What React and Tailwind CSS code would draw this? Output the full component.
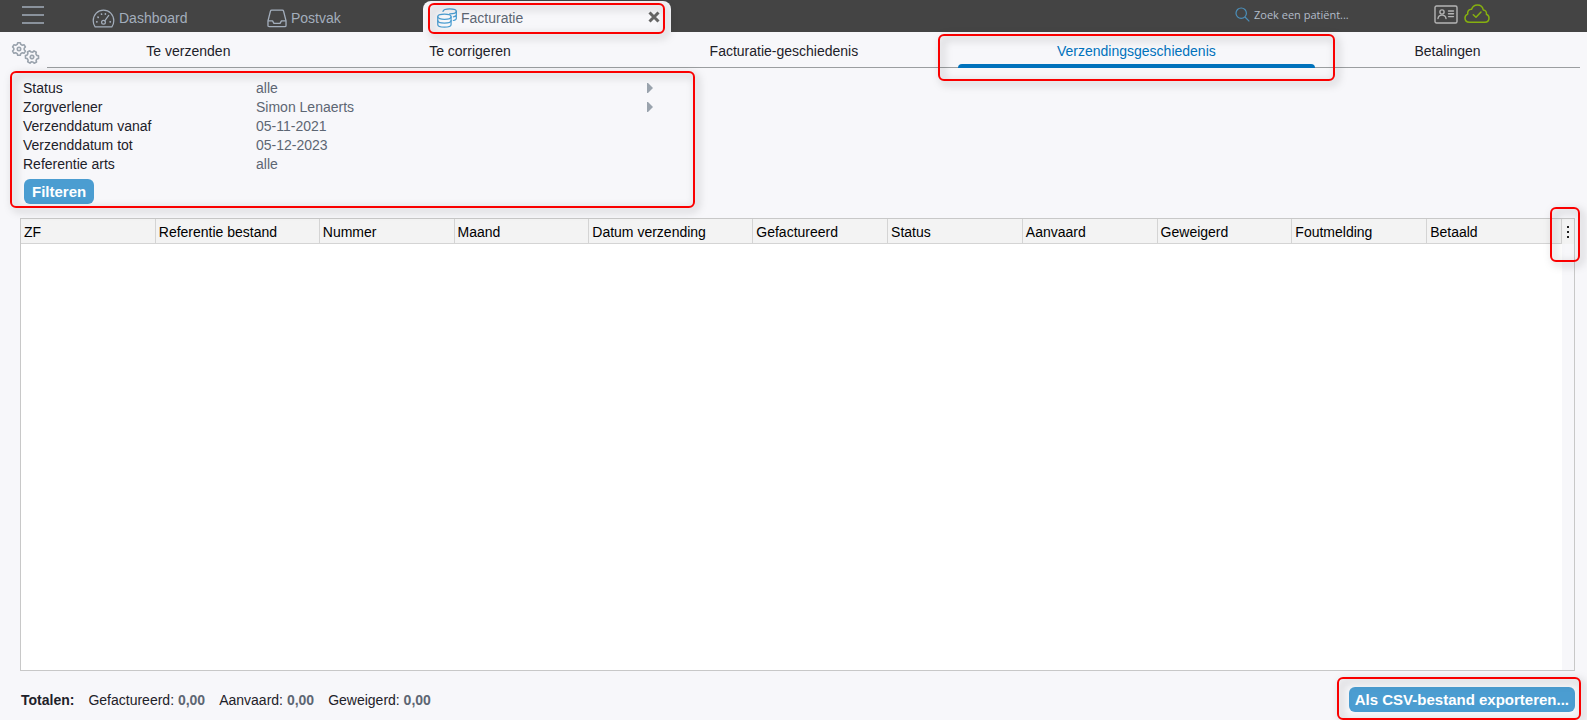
import React, { useState } from "react";

const TABS = [
  "Te verzenden",
  "Te corrigeren",
  "Facturatie-geschiedenis",
  "Verzendingsgeschiedenis",
  "Betalingen",
];

const COLUMNS = [
  { label: "ZF" },
  { label: "Referentie bestand", wide: true },
  { label: "Nummer" },
  { label: "Maand" },
  { label: "Datum verzending", wide: true },
  { label: "Gefactureerd" },
  { label: "Status" },
  { label: "Aanvaard" },
  { label: "Geweigerd" },
  { label: "Foutmelding" },
  { label: "Betaald" },
];

const FILTERS = [
  { id: "status", label: "Status", value: "alle", select: true },
  { id: "zorgverlener", label: "Zorgverlener", value: "Simon Lenaerts", select: true },
  { id: "vanaf", label: "Verzenddatum vanaf", value: "05-11-2021" },
  { id: "tot", label: "Verzenddatum tot", value: "05-12-2023" },
  { id: "referentie", label: "Referentie arts", value: "alle" },
];

const TOTALS = [
  { label: "Gefactureerd", value: "0,00" },
  { label: "Aanvaard", value: "0,00" },
  { label: "Geweigerd", value: "0,00" },
];

function GaugeIcon() {
  return (
    <svg width="23" height="19" viewBox="0 0 24 20" fill="none" stroke="currentColor" strokeWidth="1.3" strokeLinecap="round">
      <path d="M3.2 18.8h17.6c1.2-1.7 2-3.8 2-6.300C22.800 6 18 1.200 12 1.200S1.200 6 1.200 12.500c0 2.500.8 4.600 2 6.300z" strokeLinejoin="round" />
      <circle cx="12" cy="14" r="2" />
      <path d="M13.300 12.400l4.200-5.600" />
      <path d="M4.900 13.500h.2M19 13.500h.2M6.200 8.600l.2.200M9.900 5.300l.1.200M14 5.200v.1" strokeWidth="1.800" />
    </svg>
  );
}

function InboxIcon() {
  return (
    <svg width="20" height="19" viewBox="0 0 21 20" fill="none" stroke="currentColor" strokeWidth="1.400" strokeLinejoin="round">
      <path d="M1 12.500L3.600 2.200C3.800 1.500 4.200 1.200 4.900 1.200h11.200c.7 0 1.100.3 1.300 1L20 12.500v4.800c0 .9-.4 1.300-1.300 1.300H2.300C1.400 18.600 1 18.200 1 17.300z" />
      <path d="M1 12.500h4.800l1.500 2.700h6.400l1.500-2.700H20" />
    </svg>
  );
}

function CoinsIcon() {
  return (
    <svg width="20" height="20" viewBox="0 0 21 21" fill="none" stroke="#4b9dd1" strokeWidth="1.300" strokeLinecap="round">
      <ellipse cx="7.800" cy="9.200" rx="7" ry="2.700" />
      <path d="M.8 9.200v8.100c0 1.500 3.100 2.800 7 2.800s7-1.300 7-2.800V9.200" />
      <path d="M.8 13.200c0 1.500 3.100 2.700 7 2.700s7-1.200 7-2.700" />
      <path d="M6.300 3.600C6.300 2 9.400.8 13.300.8s7 1.200 7 2.700-3.100 2.700-7 2.700" />
      <path d="M20.300 3.500v7.400c0 .9-1.200 1.700-3.100 2.200M20.300 7.200c0 .9-1.200 1.700-3.100 2.200" />
    </svg>
  );
}

const GEAR =
  "M-1.300 -6.300h2.600l.5 1.700 1.500.8 1.700-.5 1.400 2.300-1.200 1.200v1.600l1.200 1.200-1.400 2.300-1.700-.5-1.500.8-.5 1.700h-2.600l-.5-1.700-1.500-.8-1.700.5-1.400-2.300 1.200-1.200v-1.600l-1.200-1.200 1.400-2.300 1.700.5 1.500-.8z";

function GearsIcon() {
  return (
    <svg width="30" height="24" viewBox="0 0 30 24" fill="none" stroke="#9aa3ad" strokeWidth="1.600" strokeLinejoin="round">
      <g transform="translate(8 8)">
        <path d={GEAR} />
        <circle r="1.700" />
      </g>
      <g transform="translate(21 16) rotate(30)">
        <path d={GEAR} />
        <circle r="1.700" />
      </g>
    </svg>
  );
}

function CardIcon() {
  return (
    <svg width="24" height="19" viewBox="0 0 24 19" fill="none" stroke="#b4b4b4" strokeWidth="1.400" strokeLinecap="round">
      <rect x="1" y="1" width="22" height="17" rx="1.500" />
      <circle cx="8" cy="7" r="2.100" />
      <path d="M4 13.500c.3-2.300 1.900-3.400 4-3.400s3.700 1.100 4 3.400M14.500 6h5M14.500 8.800h5M14.500 11.600h5" />
    </svg>
  );
}

function CloudIcon() {
  return (
    <svg width="26" height="20" viewBox="0 0 26 20" fill="none" stroke="#86b00f" strokeWidth="1.500" strokeLinecap="round" strokeLinejoin="round">
      <path d="M5.500 18.200C2.800 18.200 1 16.400 1 14c0-1.900 1.100-3.300 2.700-3.900C3.200 7 5 5 7.600 5.200 8.500 2.600 10.600 1 13.300 1c3.200 0 5.500 2 6 5 2.200.2 3.600 2 3.100 4.300 1.600.6 2.600 1.900 2.600 3.700 0 2.400-1.700 4.200-4.200 4.200z" />
      <path d="M9.300 10.700l2.700 2.600 5-5.300" />
    </svg>
  );
}

// Red frame laid over a part of the screen that needs attention
function Highlight({ className }) {
  return (
    <div
      className={`pointer-events-none absolute z-10 rounded-md border-2 border-[#fa0000] drop-shadow-[3px_3px_4px_rgba(0,0,0,0.35)] ${className}`}
    />
  );
}

function TopBar() {
  return (
    <header className="flex h-8 items-stretch bg-[#444444] text-[#a3aebc]">
      <button aria-label="Menu" className="ml-[22px] flex w-[22px] flex-col justify-between pt-1.5 pb-2">
        <span className="h-0.5 w-full bg-[#8a929c]" />
        <span className="h-0.5 w-full bg-[#8a929c]" />
        <span className="h-0.5 w-full bg-[#8a929c]" />
      </button>
      <nav className="flex">
        <a href="#dashboard" className="ml-12 flex w-[175px] items-center gap-1 pt-1">
          <GaugeIcon />
          Dashboard
        </a>
        <a href="#postvak" className="flex w-[156px] items-center gap-1 pt-1">
          <InboxIcon />
          Postvak
        </a>
        <div className="relative mt-px flex w-[248px] items-center rounded-t-lg bg-[#f7f7fa] pr-[11px] pl-3.5 text-[#5d6673]">
          <a href="#facturatie" className="flex flex-1 items-center gap-1 pt-0.5">
            <CoinsIcon />
            Facturatie
          </a>
          <button aria-label="Sluiten" className="text-[#666]">
            <svg width="12" height="12" viewBox="0 0 12 12" stroke="currentColor" strokeWidth="3">
              <path d="M1.500 1.500l9 9M10.500 1.500l-9 9" />
            </svg>
          </button>
          <Highlight className="-bottom-0.5 left-[5px] right-1.5 top-0.5" />
        </div>
      </nav>
      <div className="ml-auto flex items-center pb-1">
        <label htmlFor="zoek" aria-label="Zoek een patiënt">
          <svg width="15" height="15" viewBox="0 0 15 15" fill="none" stroke="#4b8fba" strokeWidth="1.200">
            <circle cx="6.200" cy="6.200" r="5.200" />
            <path d="M10 10l4.300 4.300" />
          </svg>
        </label>
        <input
          id="zoek"
          placeholder="Zoek een patiënt..."
          className="ml-1 w-[180px] bg-transparent pt-0.5 font-['Open_Sans',sans-serif] text-[11px] outline-none placeholder:text-[#b3bdca]"
        />
        <button aria-label="Identiteitskaart">
          <CardIcon />
        </button>
        <button aria-label="Verbonden" className="ml-1.5 mr-[97px]">
          <CloudIcon />
        </button>
      </div>
    </header>
  );
}

function TabBar({ active, onChange }) {
  return (
    <div className="flex h-9 pr-[7px]">
      <button aria-label="Instellingen" className="w-[47px] shrink-0 pt-1.5 pl-[11px]">
        <GearsIcon />
      </button>
      <div role="tablist" className="flex flex-1 border-b border-[#9b9ea0]">
        {TABS.map((t) => {
          const on = t === active;
          return (
            <button
              key={t}
              role="tab"
              aria-selected={on}
              onClick={() => onChange(t)}
              className={`relative flex-auto pt-0.5 ${on ? "text-[#0072bc]" : "text-[#1d2129]"}`}
            >
              {t}
              {on && (
                <>
                  <span className="absolute inset-x-0 -bottom-px h-1 rounded-t bg-[#0072bc]" />
                  <Highlight className="-bottom-3.5 -left-5 -right-5 top-0.5" />
                </>
              )}
            </button>
          );
        })}
      </div>
    </div>
  );
}

function FilterPanel() {
  return (
    <form onSubmit={(e) => e.preventDefault()} className="relative ml-2.5 mt-[3px] w-[685px] pt-[7px] pb-1 pl-[13px]">
      {FILTERS.map((f) => (
        <div key={f.id} className="flex h-[19px] items-center">
          <label htmlFor={f.id} className="w-[233px] text-[#1d2129]">
            {f.label}
          </label>
          {f.select ? (
            <>
              <select id={f.id} className="w-[391px] appearance-none bg-transparent text-[#5d6673] outline-none">
                <option>{f.value}</option>
              </select>
              <svg width="6" height="10" viewBox="0 0 6 10" fill="#9aa3ad">
                <path d="M0 0h1l5 5-5 5H0z" />
              </svg>
            </>
          ) : (
            <input id={f.id} defaultValue={f.value} className="w-[391px] bg-transparent text-[#5d6673] outline-none" />
          )}
        </div>
      ))}
      <button className="ml-px mt-1.5 h-[25px] rounded-md bg-[#4b9dd1] px-2 text-[15px] font-bold text-white">Filteren</button>
      <Highlight className="inset-0" />
    </form>
  );
}

function ResultTable() {
  return (
    <div className="relative ml-5 mr-3 mt-2.5 flex flex-1 border border-[#c8c8c8] bg-white">
      <div className="flex-1">
        <table className="w-full table-fixed border-separate border-spacing-0">
          <colgroup>
            {COLUMNS.map((c) => (
              <col key={c.label} className={c.wide ? "w-[164px]" : ""} />
            ))}
          </colgroup>
          <thead>
            <tr className="h-[25px] bg-[#f3f3f3]">
              {COLUMNS.map((c) => (
                <th key={c.label} className="border-r border-b border-[#d4d4d4] px-[3px] pt-0.5 text-left font-normal text-black">
                  {c.label}
                </th>
              ))}
            </tr>
          </thead>
          <tbody />
        </table>
      </div>
      <div className="w-3 bg-[#f7f7fa]">
        <button aria-label="Kolommen" className="flex h-[25px] w-full items-center justify-center bg-[#f3f3f3]">
          <svg width="2" height="12" viewBox="0 0 2 12" fill="#222">
            <path d="M0 0h2v2H0zM0 5h2v2H0zM0 10h2v2H0z" />
          </svg>
        </button>
      </div>
      <Highlight className="-right-1.5 -top-3 h-[55px] w-[30px]" />
    </div>
  );
}

export default function App() {
  const [tab, setTab] = useState("Verzendingsgeschiedenis");

  return (
    <div className="flex min-h-screen flex-col overflow-hidden bg-[#f7f7fa] font-['Liberation_Sans',Arial,sans-serif] text-sm">
      <TopBar />
      <TabBar active={tab} onChange={setTab} />
      <FilterPanel />
      <ResultTable />
      <footer className="ml-5 mr-3 flex h-[49px] items-center justify-between pt-2">
        <div className="flex gap-3.5 pl-px text-[#1d2129]">
          <b>Totalen:</b>
          {TOTALS.map((t) => (
            <span key={t.label}>
              {t.label}: <b className="text-[#5d6673]">{t.value}</b>
            </span>
          ))}
        </div>
        <div className="relative">
          <button className="h-[25px] rounded-md bg-[#4b9dd1] px-1.5 text-[15px] font-bold text-white">
            Als CSV-bestand exporteren...
          </button>
          <Highlight className="-bottom-2 -left-3 -right-1.5 -top-2.5" />
        </div>
      </footer>
    </div>
  );
}
